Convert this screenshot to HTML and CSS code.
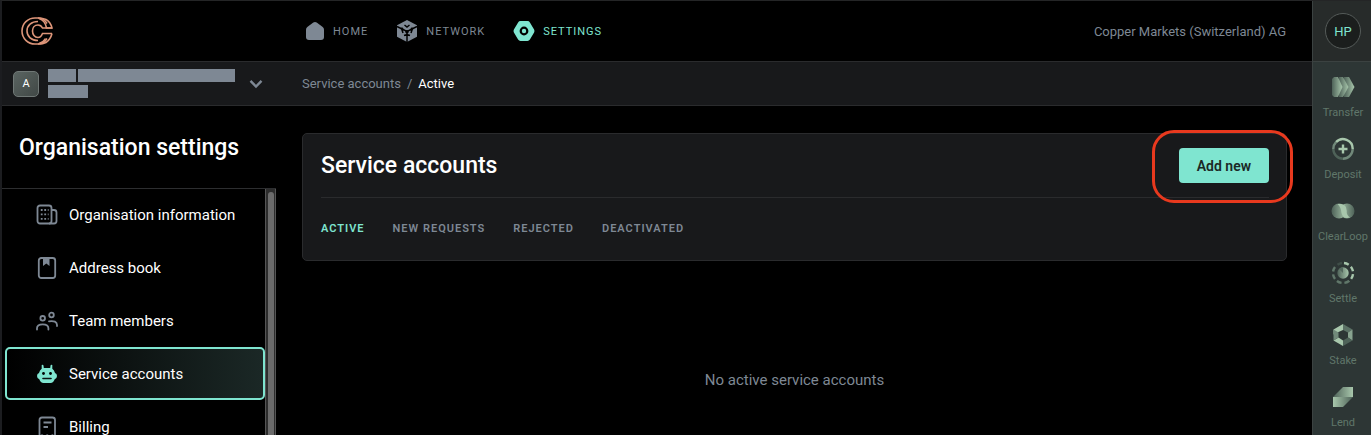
FILE: index.html
```html
<!DOCTYPE html>
<html lang="en">
<head>
<meta charset="utf-8">
<title>Service accounts</title>
<link rel="stylesheet" href="styles.css">
</head>
<body>
<div class="app">
  <div class="main">
    <header class="topbar">
      <a class="logo" href="#" aria-label="Home page">
        <svg width="32" height="28" viewBox="0 0 32 28" fill="none" stroke="#dd9579" stroke-width="1.600">
          <path d="M26 6.500C24 3 21.500 1 17 1h-3C7 1 1 6.500 1 14s6 13 13 13h3c4.500 0 7-2 9-5.500"/>
          <path d="M18 1.500c3.500 1 6.500 3.500 7.500 9.500H31C30 7 28 4 25 2.500 22.500 1.200 20 1 17 1M18 26.500c3-1 5.500-3 6.500-5M31 16.500c-1 4-3 7-6 9-2.500 1.300-5 1.500-8 1.500"/>
          <path d="M31 11H21.500C20.500 9 19 8 17 8c-3.500 0-5.500 2.700-5.500 6s2 6.500 5.500 6.500c2 0 3.500-1.500 4.500-4H31"/>
          <path d="M17 4.500C10.500 4.500 6 8.500 6 14s4.500 9.500 11 9.500"/>
        </svg>
      </a>
      <nav class="topnav">
        <a href="#"><svg width="20" height="20" viewBox="0 0 20 20" fill="currentColor"><path d="M8.300 1.500Q10 .3 11.700 1.500l6 4.500Q19 7 19 8.600V16q0 3-3 3H4q-3 0-3-3V8.600Q1 7 2.300 6z"/></svg>Home</a>
        <a href="#"><svg width="22" height="22" viewBox="0 0 22 22"><path fill="currentColor" d="M11 0l10 5.200v11.600L11 22 1 16.800V5.200z"/><g stroke="#000" stroke-width="1.500" fill="none"><path d="M11 22V12M1 6.500l10 5 10-5M8.500 5l2.500 2 2.500-2M5.500 8.500L7 13M16.500 8.500L15 13M8 15.500l3-1 3 1"/></g><circle cx="11" cy="11.800" r="1.800"/><circle cx="6" cy="8.800" r="1.300"/><circle cx="16" cy="8.800" r="1.300"/></svg>Network</a>
        <a href="#" class="current"><svg width="22" height="20" viewBox="0 0 22 20"><path fill="currentColor" d="M7.500 0h7q1.600 0 2.400 1.400l4.200 7.200q.8 1.400 0 2.800l-4.200 7.200Q16.100 20 14.500 20h-7q-1.600 0-2.400-1.400L.9 11.400q-.8-1.400 0-2.800l4.200-7.200Q5.900 0 7.500 0z"/><circle cx="11" cy="10" r="3.300" fill="none" stroke="#000" stroke-width="2.200"/></svg>Settings</a>
      </nav>
      <span class="company">Copper Markets (Switzerland) AG</span>
    </header>

    <div class="subbar">
      <div class="account">
        <span class="avatar">A</span>
        <span class="redacted"><i class="bar short"></i><i class="bar long"></i><i class="bar medium"></i></span>
        <button class="toggle" aria-label="Switch account"><svg width="14" height="10" viewBox="0 0 14 10" fill="none" stroke="#7e8894" stroke-width="2.400"><path d="M1.500 1.800L7 7.500l5.500-5.700"/></svg></button>
      </div>
      <nav class="crumbs"><a href="#">Service accounts</a><span>/</span><b>Active</b></nav>
    </div>

    <div class="body">
      <aside class="sidebar">
        <h2>Organisation settings</h2>
        <div class="scroller">
          <nav class="menu">
            <a href="#"><svg width="22" height="22" viewBox="0 0 22 22" fill="none" stroke="currentColor" stroke-width="1.800"><rect x="1.500" y="1.500" width="14" height="18" rx="2.500"/><path d="M15.500 6H18q2.500 0 2.500 2.500V17q0 2.500-2.500 2.500h-5"/><path stroke-width="1.800" stroke-dasharray="1.800 1.700" d="M4.800 6h7.800M4.800 10.400h7.800M4.800 14.800h7.800"/></svg>Organisation information</a>
            <a href="#"><svg width="22" height="22" viewBox="0 0 22 22" fill="none" stroke="currentColor" stroke-width="1.800"><rect x="2.800" y="1" width="16.400" height="20" rx="2.500"/><path fill="currentColor" stroke="none" d="M7 1h6.500v8l-3.200-2.500L7 9z"/></svg>Address book</a>
            <a href="#"><svg width="22" height="20" viewBox="0 0 22 20" fill="none" stroke="currentColor" stroke-width="1.800"><circle cx="6.700" cy="7.300" r="2.300"/><circle cx="15.500" cy="4" r="2.300"/><path stroke-linecap="round" d="M1 18.500v-1.200C1 14.500 3 13.300 6.700 13.300s5.700 1.200 5.700 4v1.200M13 10.300c5-.8 8 .5 8 3.800V15"/></svg>Team members</a>
            <a href="#" class="selected"><svg width="22" height="20" viewBox="0 0 22 20"><path fill="currentColor" d="M5.700 1q1.600-1 1.800.8l.3 2.200h6.400l.3-2.200Q14.700 0 16.300 1v3.800q2 1.200 2.700 4.200 2 .7 2 3t-2.300 3.300Q17.500 19 14.500 19h-7q-3 0-4.200-3.700Q1 14.300 1 12t2-3q.7-3 2.700-4.200z"/><circle cx="7.500" cy="9.500" r="1.400"/><circle cx="14.500" cy="9.500" r="1.400"/><path stroke="#0b1110" stroke-width="1.600" stroke-linecap="round" d="M7 14.500h8"/></svg>Service accounts</a>
            <a href="#"><svg width="22" height="22" viewBox="0 0 22 22" fill="none" stroke="currentColor" stroke-width="1.800"><path d="M3.500 20.500V4Q3.500 1.500 6 1.500h10.500Q19 1.500 19 4v16.500l-2.600-1.200-2.600 1.200-2.600-1.200-2.600 1.200L6 19.300zM7.500 6.500h8M7.500 11h4.500"/></svg>Billing</a>
          </nav>
          <div class="track"><div class="thumb"></div></div>
        </div>
      </aside>

      <main class="content">
        <section class="card">
          <div class="card-head">
            <h1>Service accounts</h1>
            <div class="action"><button class="primary">Add new</button></div>
          </div>
          <nav class="tabs">
            <a href="#" class="current">Active</a><a href="#">New requests</a><a href="#">Rejected</a><a href="#">Deactivated</a>
          </nav>
        </section>
        <p class="empty">No active service accounts</p>
      </main>
    </div>
  </div>

  <aside class="rail">
    <div class="user"><button class="initials">HP</button></div>
    <nav class="tools">
      <a href="#"><svg width="24" height="24" viewBox="0 0 24 24"><defs><linearGradient id="fade"><stop offset="0" stop-color="#4e6258"/><stop offset="1" stop-color="#a8c7ac"/></linearGradient><linearGradient id="fadeback"><stop offset="0" stop-color="#a8c7ac"/><stop offset="1" stop-color="#4e6258"/></linearGradient></defs><path fill="url(#fade)" d="M13 2h5l5.500 10L18 22h-5z"/><path fill="url(#fade)" d="M8 2h4l5.500 10L12 22H8z"/><path fill="url(#fade)" d="M3 2h4l4.500 10L7 22H3l-2-2V4z"/></svg>Transfer</a>
      <a href="#"><svg width="24" height="24" viewBox="0 0 24 24" fill="none" stroke-width="2.400"><path stroke="#a8c7ac" d="M5 5.200A9.700 9.700 0 0 1 21.700 12"/><path stroke="#71897a" d="M21.700 12A9.700 9.700 0 0 1 12 21.700"/><path stroke="#4e6258" d="M12 21.700A9.700 9.700 0 0 1 2.300 12"/><path stroke="#71897a" d="M2.300 12A9.700 9.700 0 0 1 5 5.200"/><path stroke="#a8c7ac" d="M12 7.500v9M7.500 12h9"/></svg>Deposit</a>
      <a href="#"><svg width="24" height="24" viewBox="0 0 24 24"><circle cx="16" cy="12" r="7.500" fill="url(#fadeback)"/><circle cx="8" cy="12" r="7.500" fill="url(#fade)"/><path fill="#a8c7ac" d="M10 5q6 1 5.500 7 0 4 3.500 6.500-7 2-8.500-4.500Q10 8 6.500 5z"/></svg>ClearLoop</a>
      <a href="#"><svg width="24" height="24" viewBox="0 0 24 24" fill="none"><path stroke="#60776a" stroke-width="2.400" stroke-dasharray="5 2.850" d="M18 20A10 10 0 0 1 4 6"/><path stroke="#3f4e48" stroke-width="2.400" d="M6.500 3.700A10 10 0 0 1 11 2"/><path stroke="#a8c7ac" stroke-width="2.400" stroke-dasharray="5 2.850" d="M13 2A10 10 0 0 1 18 20"/><circle cx="12" cy="12" r="5.700" fill="url(#fade)"/><path fill="#54695e" d="M12 12V6.300a5.700 5.700 0 0 0-4 1.700z"/></svg>Settle</a>
      <a href="#"><svg width="24" height="24" viewBox="0 0 24 24"><path fill="#a8c7ac" d="M12 1L2.500 6.500v5l5-2.500L12 7z"/><path fill="#5b7165" d="M12 1l9.500 5.500L17 9.500 12 7z"/><path fill="#88a38f" d="M21.500 6.500v11L17 14.500v-5z"/><path fill="#4e6258" d="M21.500 17.500L12 23v-5.500l5-3z"/><path fill="#a8c7ac" d="M12 23l-9.500-5.500 5-3 4.500 3z"/><path fill="#71897a" d="M2.500 17.500v-11l5 3v5z"/></svg>Stake</a>
      <a href="#"><svg width="24" height="24" viewBox="0 0 24 24"><path fill="url(#fade)" d="M12 2h10v10H2z"/><path fill="url(#fadeback)" d="M2 12h20L12 22H2z"/></svg>Lend</a>
    </nav>
  </aside>
</div>
</body>
</html>
```

FILE: styles.css
```css
* { box-sizing: border-box; }

body {
  margin: 0;
  background: #000;
  color: #fff;
  font-family: Roboto, "Noto Sans", sans-serif;
  font-size: 15px;
}

a { color: inherit; text-decoration: none; }
button { font: inherit; border: 0; cursor: pointer; }
svg { display: block; flex: none; }

.app {
  display: flex;
  height: 100vh;
  overflow: hidden;
  border-top: 1px solid #242526;
  border-left: 2px solid #1c1d20;
}

.main { flex: 1; min-width: 0; display: flex; flex-direction: column; }

.topbar {
  display: flex;
  align-items: center;
  flex: none;
  height: 61px;
  padding: 0 26px 0 19px;
  border-bottom: 1px solid #2a2b2d;
}
.logo { width: 284px; }
.topnav { display: flex; gap: 28px; }
.topnav a {
  display: flex;
  align-items: center;
  gap: 8px;
  color: #7e8894;
  font-size: 11px;
  letter-spacing: 1px;
  text-transform: uppercase;
}
.topnav .current { color: #7fe5d0; }
.company { margin-left: auto; color: #7e8894; font-size: 13px; }

.subbar {
  display: flex;
  align-items: center;
  flex: none;
  height: 44px;
  background: #18191b;
  border-bottom: 1px solid #2a2b2d;
}
.account { display: flex; align-items: center; width: 300px; padding-left: 11px; }
.avatar {
  width: 26px;
  height: 26px;
  border: 1px solid #707876;
  border-radius: 5px;
  background: linear-gradient(135deg, #5a6461, #414846);
  font-size: 11px;
  line-height: 24px;
  text-align: center;
}
.redacted { display: flex; flex-wrap: wrap; gap: 3px 2px; width: 188px; margin-left: 9px; }
.bar { height: 13px; background: #7e8894; }
.short { width: 28px; }
.long { width: 157px; }
.medium { width: 40px; }
.toggle { margin-left: 13px; padding: 0; background: none; }
.crumbs { display: flex; gap: 6px; font-size: 13px; color: #7e8894; }
.crumbs b { color: #fff; font-weight: 400; }

.body { flex: 1; min-height: 0; display: flex; }

.sidebar { display: flex; flex-direction: column; width: 274px; flex: none; }
.sidebar h2 {
  margin: 0;
  padding: 2px 17px 0;
  font-size: 23px;
  font-weight: 500;
  line-height: 80px;
  border-bottom: 1px solid #2d2e30;
}
.scroller { flex: 1; min-height: 0; display: flex; }
.menu { flex: 1; margin-top: -1px; padding-left: 3px; }
.menu a {
  display: flex;
  align-items: center;
  gap: 11px;
  height: 53px;
  padding-left: 29px;
  border: 2px solid transparent;
  border-radius: 5px;
}
.menu svg { color: #7e8894; }
.menu .selected {
  border-color: #7fe5d0;
  background: linear-gradient(90deg, #000, #1b2826);
}
.menu .selected svg { color: #7fe5d0; }
.track {
  width: 11px;
  padding: 3px 1px 0 2px;
  background: #2c2c2c;
  border: solid #555;
  border-width: 0 1px;
}
.thumb { height: 100%; border-radius: 4px 4px 0 0; background: #6b6b6b; }

.content { flex: 1; min-width: 0; padding: 27px 25px 0 26px; }
.card {
  padding: 0 17px 0 18px;
  border: 1px solid #2a2b2d;
  border-radius: 5px;
  background: #18191b;
}
.card-head {
  display: flex;
  align-items: center;
  justify-content: space-between;
  height: 64px;
  border-bottom: 1px solid #2a2b2d;
}
.card h1 { margin: 0; font-size: 23px; font-weight: 500; }
.action { position: relative; }
.action::after {
  content: "";
  position: absolute;
  inset: -18px -24px -20px -27px;
  border: 3px solid #e8391e;
  border-radius: 22px;
  pointer-events: none;
}
.primary {
  display: block;
  height: 35px;
  padding: 0 18px;
  border-radius: 4px;
  background: #7fe5d0;
  color: #1b2826;
  font-size: 14px;
  font-weight: 600;
}
.tabs {
  display: flex;
  gap: 28px;
  padding: 24px 0;
  color: #7e8894;
  font-size: 11px;
  font-weight: 600;
  line-height: 14px;
  letter-spacing: 1px;
  text-transform: uppercase;
}
.tabs .current { color: #7fe5d0; }
.empty { margin: 110px 0 0; color: #7e8894; text-align: center; }

.rail {
  flex: none;
  width: 59px;
  border-left: 1px solid #3b4241;
  background: #2d3635;
}
.user {
  display: flex;
  align-items: center;
  justify-content: center;
  height: 61px;
  padding-left: 2px;
  border-bottom: 1px solid #3b4241;
  background: #272b2a;
}
.initials {
  width: 36px;
  height: 36px;
  padding: 0;
  border: 1px solid #555b59;
  border-radius: 50%;
  background: #1b1e1d;
  color: #7fe5d0;
  font-size: 13px;
}
.tools { padding: 13px 0 0 2px; }
.tools a {
  display: flex;
  flex-direction: column;
  align-items: center;
  gap: 7px;
  height: 62px;
  color: #60776a;
  font-size: 11px;
  line-height: 14px;
}
```
